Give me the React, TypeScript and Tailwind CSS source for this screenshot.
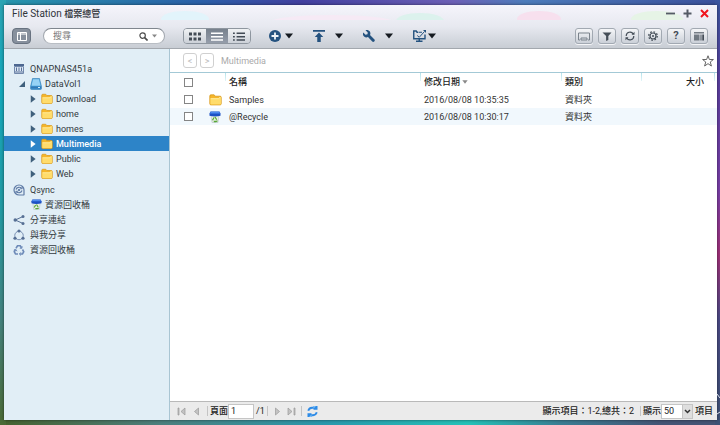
import React from "react";
import clsx from "clsx";

type IconProps = { className?: string };

const FolderIcon = ({ className = "h-3 w-3" }: IconProps) => (
  <svg viewBox="0 0 24 22" className={className}>
    <path d="M1.500 3.500q0-2 2-2h6l2 2.500h9q2 0 2 2v12q0 2-2 2h-17q-2 0-2-2z" fill="#f5b62a" stroke="#d99a1c" strokeWidth="1.500" />
    <path d="M2.500 8h15l2-2.500h2.500v12.500q0 1.500-1.500 1.500h-16.500q-1.500 0-1.500-1.500z" fill="#ffdc6b" />
    <path d="M3 8.500h15l2-2.500" fill="none" stroke="#fff0ae" strokeWidth="1.500" />
  </svg>
);

const RecycleBinIcon = ({ className = "h-3 w-3" }: IconProps) => (
  <svg viewBox="0 0 24 24" className={className}>
    <path d="M4 9h16l-2 14H6z" fill="#e8efe6" stroke="#a9b6bd" />
    <path d="M3 1h18l2 4v4.500q-11 3-22 0V5z" fill="#1c50c4" />
    <path d="M3.500 1.500h17l1.500 3.500H2z" fill="#4c8af0" />
    <path d="M12 12l3.500 5.500M17 19.500l-3 1.500h-4.500M7 18.500l3-5.500" fill="none" stroke="#58a836" strokeWidth="2.600" />
  </svg>
);

const NasIcon = () => (
  <svg viewBox="0 0 20 20" className="h-2.5 w-2.5">
    <path d="M0 0h20v4H0z" fill="#4d6790" />
    <path d="M1 5h18v14H1z" fill="#dce6f2" stroke="#7188ab" strokeWidth="2" />
    <path d="M5 7v7M10 7v7M15 7v7M2 16h16" stroke="#57719a" strokeWidth="2" />
  </svg>
);

const DriveIcon = () => (
  <svg viewBox="0 0 24 24" className="h-3 w-3">
    <path d="M5 1h14l4 16v4q0 2-2 2H3q-2 0-2-2v-4z" fill="#3f9ad8" stroke="#2473ad" />
    <path d="M6 2.500h12l3 13H3z" fill="#97d2f5" />
    <path d="M2 17h20v4H2z" fill="#3479b5" />
    <path d="M16 19h4" stroke="#d4f1ff" strokeWidth="2" />
  </svg>
);

const QsyncIcon = () => (
  <svg viewBox="0 0 24 24" className="h-3 w-3" fill="none" stroke="#5f7ba6" strokeWidth="2.400">
    <path d="M21.500 22H12A10 10 0 1 1 22 12v9.500z" />
    <path d="M6 11a6.500 6 0 0 1 11.500-2M18 13a6.500 6 0 0 1-11.500 2" />
    <path d="M18.500 4.500v5h-5M5.500 19.500v-5h5" strokeWidth="1.600" />
    <circle cx="12" cy="12" r="2.200" fill="#506f9d" stroke="none" />
  </svg>
);

const ShareIcon = () => (
  <svg viewBox="0 0 24 24" className="h-3 w-3" fill="#566f94">
    <path d="M20 5L4.500 12L20 19" fill="none" stroke="#566f94" strokeWidth="2" />
    <circle cx="4.500" cy="12" r="3.500" />
    <circle cx="20" cy="5" r="3" />
    <circle cx="20" cy="19" r="3" />
  </svg>
);

const SharedWithMeIcon = () => (
  <svg viewBox="0 0 24 24" className="h-3 w-3" fill="#566f94">
    <circle cx="12" cy="13" r="8.500" fill="none" stroke="#7990b3" strokeWidth="2" />
    <circle cx="12" cy="4" r="3.200" />
    <circle cx="4" cy="18.500" r="3.200" />
    <circle cx="20" cy="18.500" r="3.200" />
  </svg>
);

const RecycleIcon = () => (
  <svg viewBox="0 0 24 24" className="h-3 w-3" fill="none" stroke="#6d8ab8" strokeWidth="3.200">
    <path d="M6 8.500L9 3.500h5.500L17 8M19 11l2.500 4.500L19 20h-5.500M10 20H5l-2.500-4.500L5 11" />
    <path d="M13.500 8.500H18V4M16 16.500L12.500 20l3.500 3M1.500 12.500L5.500 10.500l2.500 4" strokeWidth="1.800" />
  </svg>
);

const Caret = ({ className = "h-1.5 w-2" }: IconProps) => (
  <svg viewBox="0 0 8 6" className={className}>
    <path d="M0 0.500h8L4 5.500z" fill="currentColor" />
  </svg>
);

const Expander = ({ open }: { open: boolean }) => (
  <svg viewBox="0 0 8 10" className="h-2 w-1.5" fill="currentColor">
    {open ? <path d="M8 1v8H0z" /> : <path d="M1 0l6.500 5L1 10z" />}
  </svg>
);

type TreeRowProps = {
  label: string;
  icon: React.ReactNode;
  level?: "root" | "volume" | "folder";
  open?: boolean;
  selected?: boolean;
};

const TreeRow = ({ label, icon, level = "root", open, selected }: TreeRowProps) => (
  <li>
    <button
      type="button"
      className={clsx(
        "flex h-[15px] w-full items-center text-left",
        level === "root" && "gap-[5px] pl-[9px]",
        level === "volume" && "gap-[3px] pl-[15px]",
        level === "folder" && "gap-[3px] pl-[26px]",
        selected ? "bg-[#2d84c8] font-medium text-white" : "text-[#333a40]",
      )}
    >
      {open !== undefined && (
        <span className={clsx("pr-0.5", selected ? "text-white" : "text-[#3f607c]")}>
          <Expander open={open} />
        </span>
      )}
      <span className="flex w-3 shrink-0 justify-center">{icon}</span>
      <span>{label}</span>
    </button>
  </li>
);

const folders = ["Download", "home", "homes", "Multimedia", "Public", "Web"];

const Sidebar = () => (
  <nav className="w-[166px] shrink-0 border-r border-[#a9c5d3] bg-[#e1eef6] pt-3">
    <ul>
      <TreeRow label="QNAPNAS451a" icon={<NasIcon />} />
      <TreeRow label="DataVol1" icon={<DriveIcon />} level="volume" open />
      {folders.map((name) => (
        <TreeRow
          key={name}
          label={name}
          icon={<FolderIcon />}
          level="folder"
          open={false}
          selected={name === "Multimedia"}
        />
      ))}
    </ul>
    <ul className="mt-px">
      <TreeRow label="Qsync" icon={<QsyncIcon />} />
      <TreeRow label="資源回收桶" icon={<RecycleBinIcon className="h-[11px] w-[11px]" />} level="folder" />
    </ul>
    <ul>
      <TreeRow label="分享連結" icon={<ShareIcon />} />
      <TreeRow label="與我分享" icon={<SharedWithMeIcon />} />
      <TreeRow label="資源回收桶" icon={<RecycleIcon />} />
    </ul>
  </nav>
);

const ToolButton = ({ label, children }: { label: string; children: React.ReactNode }) => (
  <button
    type="button"
    aria-label={label}
    className="flex h-4 w-[18px] items-center justify-center rounded-[3px] border border-[#a2a9b2] bg-linear-to-b from-[#f5f6f8] to-[#cbd0d8] text-[#454e58] shadow-[0_1px_0_#f4f5f7]"
  >
    {children}
  </button>
);

const MenuButton = ({ label, gap, children }: { label: string; gap: string; children: React.ReactNode }) => (
  <button type="button" aria-label={label} className={clsx("flex items-center text-[#151a20]", gap)}>
    {children}
    <Caret />
  </button>
);

const views = [
  { label: "Thumbnails", path: "M0 1h5v5H0zM7.500 1h5v5h-5zM15 1h5v5h-5zM0 9h5v5H0zM7.500 9h5v5h-5zM15 9h5v5h-5z" },
  { label: "List", path: "M0 1h20v2.500H0zM0 6.500h20V9H0zM0 12h20v2.500H0z" },
  { label: "Details", path: "M0 1h3v2.500H0zM6 1h14v2.500H6zM0 6.500h3V9H0zM6 6.500h14V9H6zM0 12h3v2.500H0zM6 12h14v2.500H6z" },
];

const ViewSwitch = () => (
  <div className="flex h-4 overflow-hidden rounded-[4px] border border-[#8e969f]">
    {views.map((view) => (
      <button
        key={view.label}
        type="button"
        aria-label={view.label}
        className={clsx(
          "flex w-[22px] items-center justify-center",
          view.label === "List"
            ? "bg-linear-to-b from-[#77818d] to-[#959daa] text-white"
            : "bg-linear-to-b from-[#f0f2f4] to-[#ccd1d8] text-[#424b55]",
        )}
      >
        <svg viewBox="0 0 20 15" className="h-[9px] w-3" fill="currentColor">
          <path d={view.path} />
        </svg>
      </button>
    ))}
  </div>
);

const Toolbar = () => (
  <div className="flex h-[26px] items-center pt-0.5 pr-[9px] pl-2">
    <button
      type="button"
      aria-label="Toggle sidebar"
      className="flex h-4 w-[19px] items-center justify-center rounded-[4px] border border-[#687280] bg-[#87909d] text-white"
    >
      <svg viewBox="0 0 20 18" className="h-[9px] w-2.5" fill="none" stroke="currentColor" strokeWidth="2">
        <path d="M1 1h18v16H1zM7 1v16M1 4h18" />
      </svg>
    </button>

    <label className="ml-3 flex h-4 w-[122px] items-center gap-1 rounded-full border border-t-[#7f868e] border-r-[#a1a7ae] border-b-[#b9bec4] border-l-[#a1a7ae] bg-white pr-[7px] pl-[9px]">
      <input
        type="text"
        aria-label="搜尋"
        placeholder="搜尋"
        className="min-w-0 flex-1 bg-transparent outline-none placeholder:text-[#777]"
      />
      <svg viewBox="0 0 20 20" className="h-[9px] w-[9px]" fill="none" stroke="#4a4a4a" strokeWidth="2.600">
        <circle cx="8" cy="8" r="6" />
        <path d="M12.500 12.500L19 19" strokeWidth="3.600" />
      </svg>
      <span className="text-[#888]">
        <Caret className="h-1 w-[5px]" />
      </span>
    </label>

    <div className="ml-[18px]">
      <ViewSwitch />
    </div>

    <div className="ml-[18px] flex items-center gap-5">
      <MenuButton label="Create" gap="gap-1">
        <svg viewBox="0 0 24 24" className="h-3 w-3">
          <circle cx="12" cy="12" r="12" fill="#24527f" />
          <path d="M12 5v14M5 12h14" stroke="#edf2f7" strokeWidth="3.600" />
        </svg>
      </MenuButton>
      <MenuButton label="Upload" gap="gap-2.5">
        <svg viewBox="0 0 24 24" className="h-3 w-3" fill="#24527f">
          <path d="M0 0h24v3.500H0zM12 5l8.500 9H15.500v10h-7V14H3.500z" />
        </svg>
      </MenuButton>
      <MenuButton label="Tools" gap="gap-2.5">
        <svg viewBox="0 0 24 24" className="h-3 w-3" fill="#24527f">
          <path d="M5 .5A7 7 0 0 1 14 10l9 9q1.500 2-.5 3.800t-4 .2l-8.500-9A7 7 0 0 1 .5 5L5 9.500 9 8.500 9.500 5z" />
        </svg>
      </MenuButton>
      <MenuButton label="Remote mount" gap="gap-0.5">
        <svg viewBox="0 0 26 24" className="h-3 w-[13px]" fill="none" stroke="#24527f" strokeWidth="2.800">
          <path d="M10 4.500H8L6.500 2H1.500v15.500H24V9" />
          <path d="M6 22.500h13M12.500 17v5" />
          <path d="M8.500 11l4 3.500L23 3" strokeWidth="2" />
          <path d="M11 4.500h7" strokeWidth="2" />
          <path d="M20 0h6v6z" fill="#24527f" stroke="none" />
        </svg>
      </MenuButton>
    </div>

    <div className="ml-auto flex gap-[5px]">
      <ToolButton label="Cast">
        <svg viewBox="0 0 24 18" className="h-[9px] w-3" fill="none" stroke="#7b838c" strokeWidth="2">
          <path d="M4 16H1V2h22v14h-3M6 16v-4h12v4z" />
        </svg>
      </ToolButton>
      <ToolButton label="Filter">
        <svg viewBox="0 0 20 20" className="h-[9px] w-2.5" fill="currentColor">
          <path d="M0 1h20l-7 8v9l-5 2V9z" />
        </svg>
      </ToolButton>
      <ToolButton label="Refresh">
        <svg viewBox="0 0 20 20" className="h-2.5 w-2.5" fill="none" stroke="currentColor" strokeWidth="2.400">
          <path d="M2.500 10A7.500 7.500 0 0 1 16.500 6M17.500 10A7.500 7.500 0 0 1 3.500 14" />
          <path d="M19 1.500v6h-6zM1 18.500v-6h6z" fill="currentColor" stroke="none" />
        </svg>
      </ToolButton>
      <ToolButton label="Settings">
        <svg viewBox="0 0 20 20" className="h-2.5 w-2.5" fill="none" stroke="currentColor">
          <circle cx="10" cy="10" r="6" strokeWidth="2.400" />
          <circle cx="10" cy="10" r="8.500" strokeWidth="2.600" strokeDasharray="3.200 3.476" />
          <circle cx="10" cy="10" r="2" fill="currentColor" stroke="none" />
        </svg>
      </ToolButton>
      <ToolButton label="Help">
        <span className="text-[11px] leading-3 font-bold">?</span>
      </ToolButton>
      <ToolButton label="Details pane">
        <svg viewBox="0 0 20 18" className="h-[9px] w-2.5" fill="currentColor">
          <path d="M0 0h20v3H0zM0 5h11v12H0z" fillOpacity="0.7" />
          <path d="M13 5h2v12h-2zM16.500 5H20v12h-3.500z" />
        </svg>
      </ToolButton>
    </div>
  </div>
);

const Header = () => (
  <header className="relative h-11 shrink-0 border-b border-[#a3a8ae] bg-linear-to-b from-[#f5f4fb] via-[#e7e9f0] to-[#c8cdd4]">
    {/* wallpaper showing through the title bar */}
    <div className="absolute inset-x-0 top-1.5 h-[9px] overflow-hidden">
      <span className="absolute left-[22%] h-4 w-12 rounded-[50%] bg-[#e2f4fb]" />
      <span className="absolute top-1 left-[37%] h-4 w-32 rounded-[50%] bg-[#f6eaf5]" />
      <span className="absolute top-0.5 left-[55%] h-4 w-12 rounded-[50%] bg-[#dcf2ed]" />
      <span className="absolute left-[72%] h-4 w-11 rounded-[50%] bg-[#f7e0ee]" />
      <span className="absolute left-[88%] h-4 w-13 rounded-[50%] bg-[#e6f4e6]" />
    </div>
    <div className="relative flex h-[17px] items-center pr-2 pl-2 text-[#30343a]">
      <h1 className="text-[10px]">
        File Station <span className="text-[9px] font-medium">檔案總管</span>
      </h1>
      <div className="ml-auto flex gap-2">
        <button type="button" aria-label="Minimize">
          <svg viewBox="0 0 9 9" className="h-[9px] w-[9px]" stroke="#555b66" strokeWidth="1.800">
            <path d="M0 4.500h9" />
          </svg>
        </button>
        <button type="button" aria-label="Maximize">
          <svg viewBox="0 0 9 9" className="h-[9px] w-[9px]" stroke="#555b66" strokeWidth="2">
            <path d="M0.500 4.500h8M4.500 0.500v8" />
          </svg>
        </button>
        <button type="button" aria-label="Close">
          <svg viewBox="0 0 9 9" className="h-[9px] w-[9px]" stroke="#f0141e" strokeWidth="2">
            <path d="M1 1l7 7M8 1l-7 7" />
          </svg>
        </button>
      </div>
    </div>
    <Toolbar />
  </header>
);

const PathBar = () => (
  <div className="flex h-6 shrink-0 items-center border-b border-[#a3c9d6] pr-[3px] pl-[13px] text-[#aaa]">
    <button type="button" aria-label="Back" className="h-[15px] w-3.5 rounded-[3px] border border-[#d0d0d0] text-[#bbb]">
      &lt;
    </button>
    <button type="button" aria-label="Forward" className="ml-[3px] h-[15px] w-3.5 rounded-[3px] border border-[#d0d0d0] text-[#bbb]">
      &gt;
    </button>
    <span className="ml-[7px]">Multimedia</span>
    <button type="button" aria-label="Favorite" className="ml-auto">
      <svg viewBox="0 0 24 24" className="h-3 w-3" fill="#fff" stroke="#555" strokeWidth="1.800">
        <path d="M12 1.500l2.800 7.500h8l-6.300 5 2.300 8-6.800-4.700L5.200 22l2.300-8L1.200 9h8z" />
      </svg>
    </button>
  </div>
);

const files = [
  { name: "Samples", date: "2016/08/08 10:35:35", icon: <FolderIcon className="h-3 w-[13px]" /> },
  { name: "@Recycle", date: "2016/08/08 10:30:17", icon: <RecycleBinIcon /> },
];

const CheckBox = ({ label }: { label: string }) => (
  <input
    type="checkbox"
    aria-label={label}
    className="block h-[9px] w-[9px] appearance-none border border-[#858585] bg-white"
  />
);

// short tick at the top left of each column title
const tick = "bg-linear-to-b from-[#b4e2ea] to-[#e2f5f8] bg-[length:1px_8px] bg-no-repeat pl-1 text-left font-medium";

const FileTable = () => (
  <div className="flex-1">
    <table className="w-full table-fixed text-[#333]">
      <colgroup>
        <col className="w-[39px]" />
        <col className="w-4" />
        <col />
        <col className="w-[141px]" />
        <col className="w-[80px]" />
        <col className="w-[73px]" />
        <col className="w-[3px]" />
      </colgroup>
      <thead>
        <tr className="h-[18px] text-[#1d1d1d]">
          <th className="pl-3.5">
            <CheckBox label="Select all" />
          </th>
          <th />
          <th className={tick}>名稱</th>
          <th className={tick}>
            <span className="flex items-center gap-0.5">
              修改日期
              <span className="text-[#888]">
                <Caret className="h-1 w-1.5" />
              </span>
            </span>
          </th>
          <th className={tick}>類別</th>
          <th className={clsx(tick, "pr-2.5")}>
            <span className="block text-right">大小</span>
          </th>
          <th className={tick} />
        </tr>
      </thead>
      <tbody>
        {files.map((file) => (
          <tr key={file.name} className="h-[17px] even:bg-[#f1f8fd]">
            <td className="pl-3.5">
              <CheckBox label={file.name} />
            </td>
            <td>{file.icon}</td>
            <td className="pl-1">{file.name}</td>
            <td className="pl-1">{file.date}</td>
            <td className="pl-1">資料夾</td>
            <td />
            <td />
          </tr>
        ))}
      </tbody>
    </table>
  </div>
);

const PagerButton = ({ label, path }: { label: string; path: string }) => (
  <button type="button" aria-label={label}>
    <svg viewBox="0 0 9 9" className="h-[9px] w-[9px]" fill="#c3c3c3" stroke="#999" strokeWidth="0.700">
      <path d={path} />
    </svg>
  </button>
);

const Divider = () => <span className="h-2.5 w-px bg-[#c4c4c4]" />;

const StatusBar = () => (
  <footer className="flex h-[19px] shrink-0 items-center border-t border-[#b9b9b9] bg-[#ebebeb] pr-1 pl-[7px] text-[#222]">
    <div className="flex items-center gap-1.5">
      <PagerButton label="First page" path="M1 1h1v7h-1zM8 1v7l-4-3.500z" />
      <PagerButton label="Previous page" path="M6.500 1v7l-4-3.500z" />
    </div>
    <div className="ml-1.5 flex items-center gap-0.5">
      <Divider />
      <label className="flex items-center">
        <span className="font-medium">頁面</span>
        <input type="text" defaultValue="1" className="h-[15px] w-[26px] border border-[#c5c5c5] bg-white pl-0.5" />
      </label>
      <span>/1</span>
    </div>
    <div className="ml-0.5 flex items-center gap-[5px]">
      <Divider />
      <PagerButton label="Next page" path="M2.500 1v7l4-3.500z" />
      <PagerButton label="Last page" path="M7 1h1v7h-1zM1 1v7l4-3.500z" />
      <Divider />
      <button type="button" aria-label="Reload">
        <svg viewBox="0 0 22 22" className="h-[11px] w-[11px]" fill="none" stroke="#2e8be6" strokeWidth="3.600">
          <path d="M2.500 9.500Q4 4 10 3.500h5M19.500 12.500Q18 18 12 18.500H7" />
          <path d="M13 0v7.500h8V0zM9 22v-7.500H1V22z" fill="#2e8be6" stroke="none" />
          <path d="M13 0h5l-5 5zM9 22H4l5-5z" fill="#7fc0f7" stroke="none" />
        </svg>
      </button>
    </div>
    <div className="ml-auto flex items-center gap-0.5 font-medium">
      <span>
        顯示項目：<span className="font-normal">1-2,</span>總共：<span className="font-normal">2</span>
      </span>
      <span className="ml-1 flex">
        <Divider />
      </span>
      <label className="flex items-center">
        顯示
        <span className="relative block">
          <select className="h-[15px] w-8 appearance-none border border-[#c5c5c5] bg-white pl-0.5 font-normal">
            <option>50</option>
          </select>
          <span className="pointer-events-none absolute inset-y-0 right-0 flex w-[11px] items-center justify-center border border-[#c5c5c5] bg-[#dedede]">
            <svg viewBox="0 0 7 5" className="h-[5px] w-[7px]" fill="none" stroke="#333" strokeWidth="1.500">
              <path d="M1 1l2.500 2.500L6 1" />
            </svg>
          </span>
        </span>
      </label>
      <span>項目</span>
    </div>
  </footer>
);

const wallpaper =
  "[background:linear-gradient(#2ba3b3,#14a9bd_20%,#239aa3_50%,#44827e_75%,#4b6a35)_left/6px_100%_no-repeat,linear-gradient(#3b57a0,#5b3fa0_20%,#7a3fa8_45%,#a03078_60%,#4b4a86_75%,#3d5275)_right/5px_100%_no-repeat,linear-gradient(90deg,#2797ad,#2b5fa8_28%,#4340a0_42%,#6c60b6_63%,#4d7cbb_73%,#3b519c)_top/100%_8px_no-repeat,linear-gradient(90deg,#46622e,#4c7f7d_22%,#2a98ac_45%,#25c2b8_65%,#3a7d93_78%,#445475_92%)_bottom/100%_8px_no-repeat]";

const App = () => {
  return (
    <div
      className={clsx(
        "relative flex h-screen overflow-hidden pt-[5px] pr-[3px] pb-[5px] pl-1 font-['Roboto','Noto_Sans_CJK_TC',sans-serif] text-[9px] leading-3",
        wallpaper,
      )}
    >
      <main className="flex min-w-0 flex-1 flex-col bg-white shadow-[0_0_3px_#0008]">
        <Header />
        <div className="flex min-h-0 flex-1">
          <Sidebar />
          <section className="flex min-w-0 flex-1 flex-col">
            <PathBar />
            <FileTable />
            <StatusBar />
          </section>
        </div>
      </main>
      {/* desktop shortcut cut off by the bottom edge */}
      <svg viewBox="0 0 4 28" className="absolute right-0 bottom-1 h-7 w-1" fill="none" stroke="#dfe4ee">
        <path d="M1 1l3 4M1 21l3-2" />
      </svg>
    </div>
  );
};

export default App;
